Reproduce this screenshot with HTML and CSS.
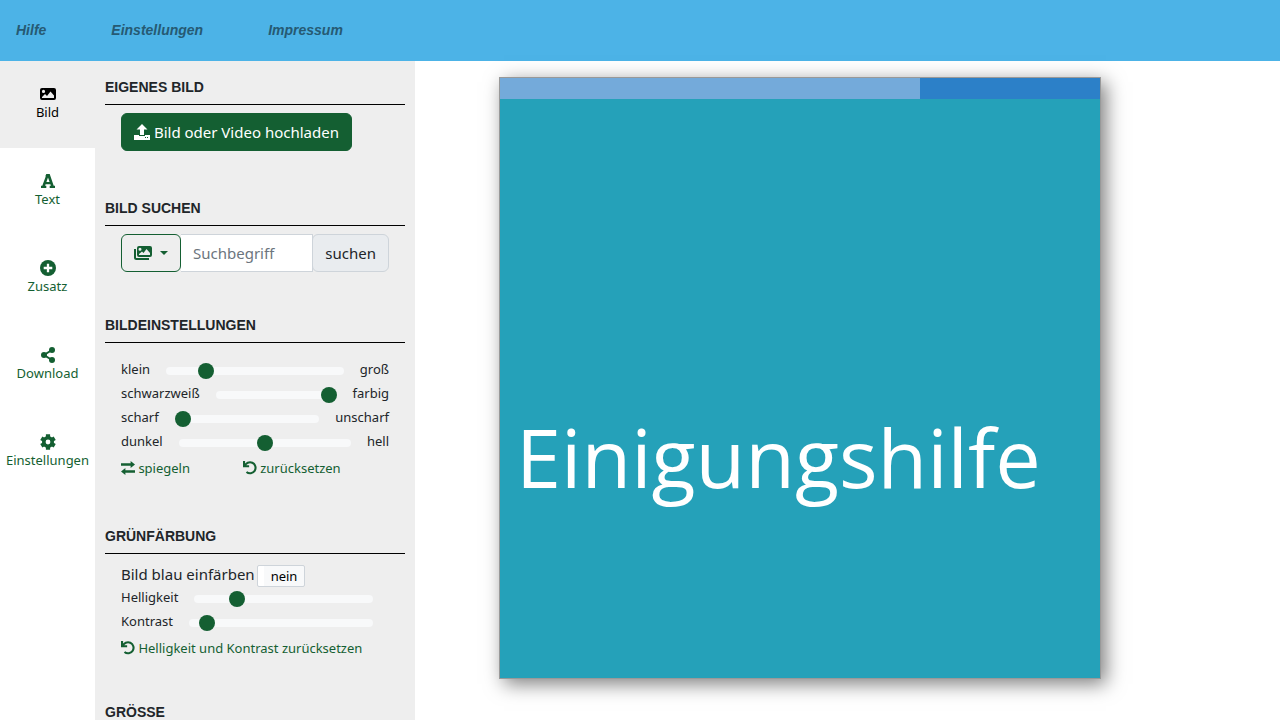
FILE: index.html
```html
<!DOCTYPE html>
<html lang="de">
<head>
<meta charset="utf-8">
<meta name="viewport" content="width=device-width, initial-scale=1">
<title>Bildgenerator</title>
<link rel="stylesheet" href="styles.css">
</head>
<body>
<svg class="sprite" aria-hidden="true">
  <symbol id="undo" viewBox="0 0 16 16"><path d="M1.200 0v6H7M2 6a6.300 6.300 0 1 1 2 6.600" fill="none" stroke="currentColor" stroke-width="2.400"/></symbol>
</svg>
<header class="topbar">
  <nav class="topnav">
    <a href="#hilfe">Hilfe</a>
    <a href="#einstellungen">Einstellungen</a>
    <a href="#impressum">Impressum</a>
  </nav>
</header>
<div class="workspace">
  <nav class="tabs">
    <a class="tab tab-active" href="#bild">
      <svg class="icon" viewBox="0 0 16 16"><path fill="currentColor" fill-rule="evenodd" d="M2 2h12a2 2 0 0 1 2 2v8a2 2 0 0 1-2 2H2a2 2 0 0 1-2-2V4a2 2 0 0 1 2-2zM3.500 3.800a1.600 1.600 0 1 0 0 3.200 1.600 1.600 0 0 0 0-3.200zM2 12h12V9.500l-3.500-4-3.500 4.500-2-2-3 3z"/></svg>
      Bild</a>
    <a class="tab" href="#text">
      <svg class="icon" viewBox="0 0 16 16"><path fill="currentColor" fill-rule="evenodd" d="M6.300 1h3.400l4 11.700H15V15H9.700v-2.300h1.200l-.5-1.500H5.600l-.5 1.500h1.200V15H1v-2.300h1.300L5.800 3.300h-.5zM8 4.500 6.400 9h3.200z"/></svg>
      Text</a>
    <a class="tab" href="#zusatz">
      <svg class="icon" viewBox="0 0 16 16"><circle cx="8" cy="8" r="8" fill="currentColor"/><path d="M8 3.700v8.600M3.700 8h8.600" stroke="#fff" stroke-width="2.300"/></svg>
      Zusatz</a>
    <a class="tab" href="#download">
      <svg class="icon" viewBox="0 0 16 16"><g fill="currentColor"><circle cx="12" cy="3" r="3"/><circle cx="4" cy="8" r="3"/><circle cx="12" cy="13" r="3"/></g><path d="M12 3 4 8l8 5" fill="none" stroke="currentColor" stroke-width="2"/></svg>
      Download</a>
    <a class="tab" href="#optionen">
      <svg class="icon" viewBox="0 0 16 16"><g fill="none" stroke="currentColor"><circle cx="8" cy="8" r="4.200" stroke-width="3.600"/><path stroke-width="4.200" d="M8 .3v3M8 12.700v3M1.300 4.200l2.600 1.500M12.100 10.300l2.600 1.500M1.300 11.800l2.600-1.500M12.100 5.700l2.600-1.500"/></g></svg>
      Einstellungen</a>
  </nav>
  <aside class="panel">
    <section class="section section-roomy">
      <h2>Eigenes Bild</h2>
      <div class="content">
        <button class="btn btn-primary" type="button"><svg class="icon" viewBox="0 0 16 16"><path fill="currentColor" d="M8 0l5.500 5.500H10V11H6V5.500H2.500zM0 11h5v1h6v-1h5v5H0z"/><path fill="#145f32" d="M11 13h1v1h-1zM13 13h1v1h-1z"/></svg> Bild oder Video hochladen</button>
      </div>
    </section>
    <section class="section">
      <h2>Bild suchen</h2>
      <form class="content search">
        <button class="btn btn-outline" type="button" aria-label="Bildquelle"><svg class="icon icon-wide" viewBox="0 0 18 16"><path fill="currentColor" fill-rule="evenodd" d="M5 1h11a2 2 0 0 1 2 2v7a2 2 0 0 1-2 2H5a2 2 0 0 1-2-2V3a2 2 0 0 1 2-2zm1 1.800a1.500 1.500 0 1 0 0 3 1.500 1.500 0 0 0 0-3zM5 10h11V8l-3.500-4L9.500 8 8 6.500 5 9z"/><path d="M1 4v8.500q0 1.500 1.500 1.500H15" fill="none" stroke="currentColor" stroke-width="2"/></svg><span class="caret"></span></button>
        <input class="search-input" type="text" placeholder="Suchbegriff" aria-label="Suchbegriff">
        <button class="btn btn-addon" type="button">suchen</button>
      </form>
    </section>
    <section class="section section-roomy">
      <h2>Bildeinstellungen</h2>
      <div class="content content-low">
        <div class="slider"><label for="zoom">klein</label><input id="zoom" type="range" min="0" max="100" value="20"><span>groß</span></div>
        <div class="slider"><label for="farbe">schwarzweiß</label><input id="farbe" type="range" min="0" max="100" value="100"><span>farbig</span></div>
        <div class="slider"><label for="blur">scharf</label><input id="blur" type="range" min="0" max="100" value="0"><span>unscharf</span></div>
        <div class="slider"><label for="licht">dunkel</label><input id="licht" type="range" min="0" max="100" value="50"><span>hell</span></div>
        <div class="actions">
          <a href="#spiegeln"><svg class="icon icon-small" viewBox="0 0 16 16"><path fill="currentColor" d="M0 2.700h11V0l5 4-5 4V5.300H0zM16 10.700H5V8l-5 4 5 4v-2.700h11z"/></svg> spiegeln</a>
          <a href="#zuruecksetzen"><svg class="icon icon-small"><use href="#undo"/></svg> zurücksetzen</a>
        </div>
      </div>
    </section>
    <section class="section">
      <h2>Grünfärbung</h2>
      <div class="content">
        <div class="tint"><span>Bild blau einfärben</span><button class="toggle" type="button">nein</button></div>
        <div class="slider slider-short"><label for="helligkeit">Helligkeit</label><input id="helligkeit" type="range" min="0" max="100" value="21"></div>
        <div class="slider slider-short"><label for="kontrast">Kontrast</label><input id="kontrast" type="range" min="0" max="100" value="6"></div>
        <div class="actions actions-single"><a href="#tint-reset"><svg class="icon icon-small"><use href="#undo"/></svg> Helligkeit und Kontrast zurücksetzen</a></div>
      </div>
    </section>
    <section class="section">
      <h2>Grösse</h2>
    </section>
  </aside>
  <main class="stage">
    <div class="artboard">
      <div class="stripe"></div>
      <div class="headline">Einigungshilfe</div>
    </div>
  </main>
</div>
</body>
</html>
```
FILE: styles.css
```css
* { box-sizing: border-box; }

body {
  display: flex;
  flex-direction: column;
  height: 100vh;
  margin: 0;
  overflow: hidden;
  background: #fff;
  color: #212529;
  font: 15px/24px "Noto Sans", sans-serif;
}

a { text-decoration: none; }
button, input { font: inherit; }
.sprite { display: none; }

.icon {
  width: 16px;
  height: 16px;
  overflow: visible;
}
.icon-wide { width: 18px; }
.icon-small { width: 14px; height: 14px; vertical-align: -2px; }

.topbar {
  flex: none;
  padding: 16px;
  background: #4cb3e7;
}
.topnav {
  display: flex;
  gap: 65px;
}
.topnav a {
  color: #265a73;
  font: italic bold 14px/29px "Liberation Sans", sans-serif;
}

.workspace {
  display: flex;
  flex: 1;
  min-height: 0;
}

.tabs {
  flex: none;
  width: 95px;
}
.tab {
  display: flex;
  flex-direction: column;
  align-items: center;
  padding: 25px 0 26px;
  color: #145f32;
  font-size: 13px;
  line-height: 20px;
}
.tab-active {
  background: #eee;
  color: #000;
}

.panel {
  flex: none;
  width: 320px;
  padding: 16px 10px;
  overflow: hidden;
  background: #eee;
}
.section { margin-bottom: 43px; }
.section-roomy { margin-bottom: 47px; }
.section h2 {
  margin: 0;
  padding-bottom: 7px;
  border-bottom: 1px solid #000;
  font: bold 14px/20px "Liberation Sans", sans-serif;
  text-transform: uppercase;
}
.content { padding: 8px 16px 0; }
.content-low { padding-top: 16px; }

.btn {
  padding: 6px 12px;
  border: 1px solid #145f32;
  border-radius: 6px;
  white-space: nowrap;
}
.btn .icon { vertical-align: -2px; }
.btn-primary {
  display: block;
  background: #145f32;
  color: #fff;
}
.search { display: flex; }
.btn-outline {
  background: transparent;
  color: #145f32;
}
.btn-addon {
  margin-left: -1px;
  border-color: #ced4da;
  background: #e9ecef;
  color: #212529;
}
.caret {
  display: inline-block;
  margin-left: 8px;
  border: 4px solid transparent;
  border-top-color: currentColor;
  border-bottom: 0;
  vertical-align: 4px;
}
.search-input {
  flex: 1;
  min-width: 0;
  padding: 6px 12px;
  border: 1px solid #ced4da;
  border-left: 0;
  background: #fff;
}
.search-input::placeholder { color: #6c757d; }

.slider {
  display: flex;
  gap: 16px;
  height: 24px;
  font-size: 13px;
  line-height: 21px;
}
.slider-short { padding-right: 16px; }
.slider input {
  flex: 1;
  min-width: 0;
  height: 24px;
  margin: 0;
  appearance: none;
  background: transparent;
}
.slider input::-webkit-slider-runnable-track {
  height: 8px;
  border-radius: 8px;
  background: #f8f9fa;
}
.slider input::-webkit-slider-thumb {
  width: 16px;
  height: 16px;
  margin-top: -4px;
  border-radius: 50%;
  appearance: none;
  background: #145f32;
}

.actions {
  display: grid;
  grid-template-columns: 5fr 6fr;
  padding-top: 3px;
  font-size: 13px;
  line-height: 21px;
}
.actions-single { grid-template-columns: 1fr; }
.actions a {
  color: #145f32;
  white-space: nowrap;
}

.tint {
  display: flex;
  align-items: flex-end;
  gap: 2px;
  height: 25px;
}
.tint span { align-self: flex-start; }
.toggle {
  height: 22px;
  padding: 0 7px 0 13px;
  border: 1px solid #ced4da;
  border-radius: 2px;
  background: linear-gradient(to right, #fff 6px, #f8f9fa 6px);
  color: #000;
  font-size: 13px;
  line-height: 20px;
}

.stage {
  flex: 1;
  padding: 16px 84px;
}
.artboard {
  max-width: 602px;
  aspect-ratio: 1;
  border: 1px solid #999;
  background: #25a1b9;
  box-shadow: 5px 5px 18px rgba(0, 0, 0, 0.5);
}
.stripe {
  height: 21px;
  background: linear-gradient(to right, #74aada 70%, #2c80c8 70%);
}
.headline {
  padding: 304px 16px 0;
  color: #fff;
  font: 81px/108px "Open Sans", sans-serif;
}
```
